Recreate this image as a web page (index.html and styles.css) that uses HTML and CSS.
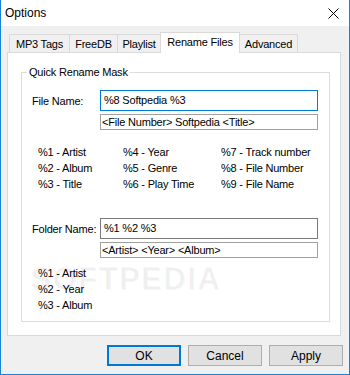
FILE: index.html
```html
<!DOCTYPE html>
<html>
<head>
  <title>Options</title>
  <link rel="stylesheet" href="styles.css">
</head>
<body>
  <div class="window">
    <div class="titlebar">
      <span class="title">Options</span>
      <svg class="close" width="11" height="11" viewBox="0 0 11 11">
        <path d="M0.5 0.5L10.5 10.5M10.5 0.5L0.5 10.5" stroke="#000" stroke-width="1"/>
      </svg>
    </div>
    <div class="dialog">
      <div class="tabs">
        <div class="tab tab-mp3">MP3 Tags</div>
        <div class="tab tab-freedb">FreeDB</div>
        <div class="tab tab-playlist">Playlist</div>
        <div class="tab tab-rename selected">Rename Files</div>
        <div class="tab tab-advanced">Advanced</div>
      </div>
      <div class="panel">
        <fieldset class="group">
          <legend>Quick Rename Mask</legend>
          <div class="mask-row">
            <span class="mask-label">File Name:</span>
            <div class="textbox focused">%8 Softpedia %3</div>
          </div>
          <div class="preview">&lt;File Number&gt; Softpedia &lt;Title&gt;</div>
          <div class="vars">
            <span>%1 - Artist</span>
            <span>%2 - Album</span>
            <span>%3 - Title</span>
            <span>%4 - Year</span>
            <span>%5 - Genre</span>
            <span>%6 - Play Time</span>
            <span>%7 - Track number</span>
            <span>%8 - File Number</span>
            <span>%9 - File Name</span>
          </div>
          <div class="mask-row folder-row">
            <span class="mask-label">Folder Name:</span>
            <div class="textbox">%1 %2 %3</div>
          </div>
          <div class="preview">&lt;Artist&gt; &lt;Year&gt; &lt;Album&gt;</div>
          <div class="folder-vars">
            <span>%1 - Artist</span>
            <span>%2 - Year</span>
            <span>%3 - Album</span>
          </div>
          <div class="watermark">SOFTPEDIA<sup>&reg;</sup></div>
        </fieldset>
      </div>
      <div class="buttons">
        <button type="button" class="btn default">OK</button>
        <button type="button" class="btn">Cancel</button>
        <button type="button" class="btn">Apply</button>
      </div>
    </div>
  </div>
</body>
</html>
```

FILE: styles.css
```css
/* Base */
body {
  margin: 0;
  font-family: "Liberation Sans", Arial, sans-serif;
  font-size: 11px;
  letter-spacing: -0.2px;
  color: #000;
}

/* Window frame */
.window {
  width: 350px;
  height: 375px;
  box-sizing: border-box;
  border: 1px solid #1883d7;
  border-top: none;
  display: flex;
  flex-direction: column;
  white-space: nowrap;
}
.titlebar {
  height: 26px;
  flex: 0 0 26px;
  background: #fff;
  display: flex;
  align-items: center;
  justify-content: space-between;
  padding: 0 10px 0 4px;
}
.title {
  font-size: 12px;
  letter-spacing: 0;
}
.close {
  display: block;
  margin-top: 1px;
}

/* Dialog body */
.dialog {
  flex: 1;
  background: #f0f0f0;
  padding: 6px 8px 0 6px;
}

/* Tabs */
.tabs {
  height: 20px;
  display: flex;
  align-items: flex-end;
  padding-left: 2px;
}
.tab {
  height: 18px;
  box-sizing: border-box;
  border: 1px solid #d9d9d9;
  border-bottom: none;
  margin-right: -1px;
  padding-top: 1px;
  line-height: 16px;
  text-align: center;
  background: #f0f0f0;
}
.tab-mp3 { width: 61px; }
.tab-freedb { width: 49px; }
.tab-playlist { width: 44px; }
.tab-rename { width: 80px; }
.tab-advanced { width: 59px; }
.tab.selected {
  height: 21px;
  margin-bottom: -1px;
  background: #fff;
  position: relative;
  z-index: 1;
}

/* Page panel */
.panel {
  height: 284px;
  box-sizing: border-box;
  border: 1px solid #d9d9d9;
  background: #fff;
  padding: 12px 10px 13px 13px;
  display: flex;
}
.group {
  flex: 1;
  min-width: 0;
  margin: 0;
  border: 1px solid #dcdcdc;
  padding: 10px 11px 0 10px;
  position: relative;
}
.group legend {
  margin-left: -5px;
  padding: 0 2px;
  line-height: 15px;
}

/* Mask rows */
.mask-row {
  display: flex;
  align-items: center;
  height: 21px;
}
.mask-label {
  width: 68px;
  flex: 0 0 68px;
}
.textbox {
  width: 218px;
  height: 21px;
  box-sizing: border-box;
  border: 1px solid #7a7a7a;
  padding: 0 3px;
  line-height: 19px;
  background: #fff;
}
.textbox.focused {
  border-color: #0078d7;
}
.preview {
  width: 218px;
  height: 16px;
  box-sizing: border-box;
  margin: 3px 0 0 68px;
  border: 1px solid #a0a0a0;
  padding: 0 1px;
  line-height: 14px;
}
.folder-row {
  margin-top: 26px;
}

/* Variable lists */
.vars {
  margin-top: 14px;
  padding-left: 6px;
  display: grid;
  grid-template-columns: 85px 98px auto;
  grid-template-rows: repeat(3, 16px);
  grid-auto-flow: column;
  line-height: 16px;
}
.folder-vars {
  margin-top: 7px;
  padding-left: 6px;
  display: flex;
  flex-direction: column;
  line-height: 16px;
}

/* Softpedia watermark */
.watermark {
  position: absolute;
  left: 8px;
  top: 181px;
  font-size: 31px;
  font-weight: bold;
  letter-spacing: 1.5px;
  color: rgba(0, 0, 0, 0.03);
  text-shadow: 1px 1px 0 rgba(0, 0, 0, 0.035);
  pointer-events: none;
}
.watermark sup {
  font-size: 11px;
  vertical-align: 14px;
}

/* Buttons */
.buttons {
  margin: 9px -2px 0 0;
  display: flex;
  justify-content: flex-end;
  gap: 7px;
}
.btn {
  width: 74px;
  height: 21px;
  box-sizing: border-box;
  border: 1px solid #adadad;
  background: #e1e1e1;
  font-family: "Liberation Sans", Arial, sans-serif;
  font-size: 12px;
  color: #000;
  padding: 0;
}
.btn.default {
  border: 2px solid #0078d7;
}
```
